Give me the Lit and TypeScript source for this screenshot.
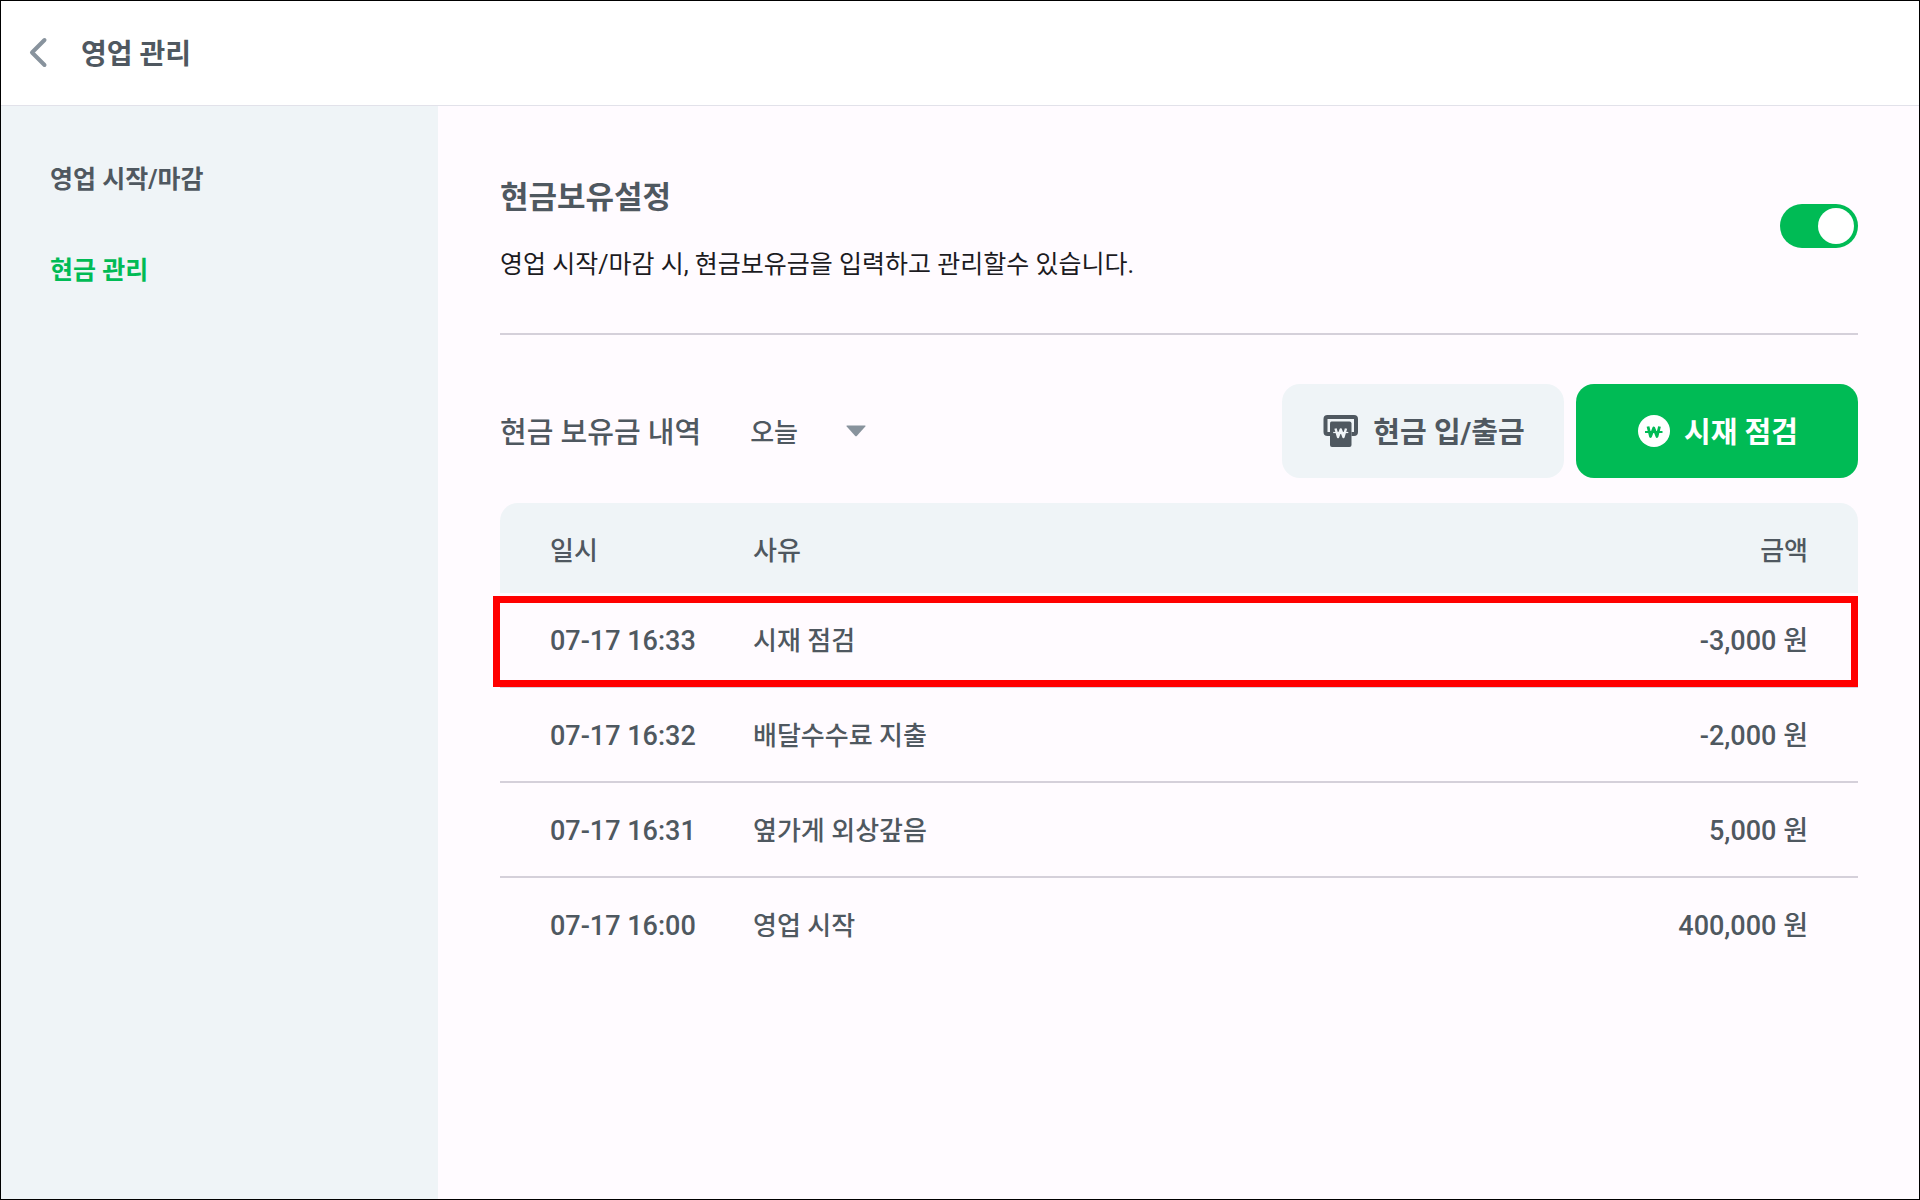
import { LitElement, html, css, svg } from "lit";
import { customElement, state } from "lit/decorators.js";
import { classMap } from "lit/directives/class-map.js";

interface CashEntry {
  date: string;
  reason: string;
  amount: number;
  highlighted?: boolean;
}

const ENTRIES: CashEntry[] = [
  { date: "07-17 16:33", reason: "시재 점검", amount: -3000, highlighted: true },
  { date: "07-17 16:32", reason: "배달수수료 지출", amount: -2000 },
  { date: "07-17 16:31", reason: "옆가게 외상갚음", amount: 5000 },
  { date: "07-17 16:00", reason: "영업 시작", amount: 400000 },
];

const backIcon = svg`<svg class="back-icon" viewBox="0 0 20 32" aria-hidden="true">
  <path d="M16.5 3 L4 15.5 L16.5 28" fill="none" stroke="currentColor" stroke-width="4" stroke-linecap="round" stroke-linejoin="round"/>
</svg>`;

const cashIcon = svg`<svg class="cash-icon" viewBox="0 0 36 32" aria-hidden="true">
  <path d="M7 19 H4.5 Q2.5 19 2.5 17 V4 Q2.5 2 4.5 2 H31 Q33 2 33 4 V17 Q33 19 31 19 H28.5" fill="none" stroke="currentColor" stroke-width="4"/>
  <path d="M8.5 6.5 H26.5 Q28.5 6.5 28.5 8.5 V30 Q28.5 32 26.5 32 H9 Q7 32 7 30 V8.5 Q7 6.5 8.5 6.5 Z" fill="currentColor"/>
  <path d="M12.5 13.5 L15 22 L17.75 14.5 L20.5 22 L23 13.5" fill="none" stroke="#eff4f7" stroke-width="2.4" stroke-linejoin="round"/>
  <path d="M10.2 17.5 H25.3" stroke="#eff4f7" stroke-width="1.2"/>
</svg>`;

const coinIcon = svg`<svg class="coin-icon" viewBox="0 0 32 32" aria-hidden="true">
  <circle cx="16" cy="16" r="16" fill="currentColor"/>
  <path d="M10 11.5 L12.5 21.5 L15.75 13 L19 21.5 L21.5 11.5" fill="none" stroke="#00bb55" stroke-width="2.8" stroke-linejoin="round"/>
  <path d="M7 17 H24.5" stroke="#00bb55" stroke-width="2"/>
</svg>`;

@customElement("app-root")
export class AppRoot extends LitElement {
  @state() private cashEnabled = true;

  static styles = css`
    :host {
      display: block;
      --ink: #4f5860;
      --green: #00bb55;
      --panel: #eff4f7;
      color: var(--ink);
      font-family: Roboto, "Noto Sans CJK KR", sans-serif;
      font-size: 26px;
      line-height: 40px;
    }
    * {
      box-sizing: border-box;
    }
    h1, h2, h3, p {
      margin: 0;
    }
    button, select {
      font: inherit;
      color: inherit;
      border: 0;
      background: none;
      padding: 0;
      cursor: pointer;
    }
    .screen {
      min-height: 100vh;
      display: flex;
      flex-direction: column;
      border: 1px solid #000;
      background: #fffbff;
    }
    .topbar {
      display: flex;
      align-items: center;
      gap: 33px;
      height: 105px;
      padding: 0 27px;
      background: #fff;
      border-bottom: 1px solid #e2e2ea;
    }
    .back {
      display: flex;
      color: #88939d;
    }
    .back-icon {
      width: 20px;
      height: 32px;
    }
    .title {
      padding-top: 4px;
      font-size: 28px;
      font-weight: 700;
    }
    .body {
      flex: 1;
      display: flex;
    }
    .sidebar {
      flex: 0 0 437px;
      display: flex;
      flex-direction: column;
      align-items: flex-start;
      gap: 51px;
      padding: 54px 49px;
      background: var(--panel);
    }
    .nav-link {
      color: inherit;
      text-decoration: none;
      font-size: 25px;
      font-weight: 700;
    }
    .nav-link.active {
      color: var(--green);
    }
    .content {
      flex: 1;
      min-width: 0;
      padding: 72px 61px 0 62px;
    }
    .setting {
      display: flex;
      justify-content: space-between;
      align-items: center;
      padding-bottom: 48px;
      border-bottom: 2px solid #d5d0da;
    }
    .setting-text {
      display: flex;
      flex-direction: column;
      gap: 27px;
    }
    .setting-title {
      font-size: 31px;
      font-weight: 700;
    }
    .setting-note {
      font-size: 25px;
      color: #1c1b1f;
    }
    .switch {
      appearance: none;
      display: flex;
      width: 78px;
      height: 44px;
      margin: 0 0 12px;
      padding: 4px;
      border-radius: 22px;
      background: #b5bcc2;
      cursor: pointer;
    }
    .switch::before {
      content: "";
      width: 36px;
      height: 36px;
      border-radius: 50%;
      background: #fff;
    }
    .switch:checked {
      justify-content: flex-end;
      background: var(--green);
    }
    .toolbar {
      display: flex;
      align-items: center;
      gap: 12px;
      padding: 49px 0 25px;
    }
    .list-title {
      padding-top: 4px;
      font-size: 29px;
      font-weight: 500;
    }
    .period {
      display: flex;
      align-items: center;
      margin: 0 auto 0 37px;
    }
    .period-select {
      appearance: none;
      width: 116px;
      height: 44px;
      padding-top: 4px;
      font-size: 26px;
      font-weight: 500;
    }
    .period-arrow {
      width: 20px;
      height: 12px;
      margin-left: -20px;
      color: #88939d;
      pointer-events: none;
    }
    .action {
      display: flex;
      justify-content: center;
      align-items: center;
      gap: 14px;
      width: 282px;
      height: 94px;
      padding-left: 2px;
      border-radius: 18px;
      font-size: 29px;
      font-weight: 700;
      background: var(--panel);
    }
    .action.primary {
      background: var(--green);
      color: #fff;
    }
    .action-label {
      padding-top: 4px;
    }
    .cash-icon {
      width: 36px;
      height: 32px;
    }
    .coin-icon {
      width: 32px;
      height: 32px;
    }
    .history {
      width: 100%;
      border-collapse: separate;
      border-spacing: 0;
      font-weight: 500;
    }
    .history th {
      height: 90px;
      padding: 6px 0 0;
      font-weight: 500;
      text-align: left;
      background: var(--panel);
    }
    .history td {
      height: 95px;
      padding: 2px 0 0;
      border-bottom: 2px solid #d5d0da;
    }
    .history tr:last-child td {
      border-bottom-color: transparent;
    }
    .history .date {
      width: 253px;
      padding-left: 50px;
    }
    .history .amount {
      text-align: right;
      padding-right: 50px;
    }
    .history td.date,
    .history td.amount {
      font-size: 27px;
    }
    .history th:first-child {
      border-top-left-radius: 18px;
    }
    .history th:last-child {
      border-top-right-radius: 18px;
    }
    .row {
      position: relative;
    }
    .row.highlighted::after {
      content: "";
      position: absolute;
      inset: 3px 0 1px -7px;
      border: 7px solid #f00;
      pointer-events: none;
    }
  `;

  private toggleCash(event: Event) {
    this.cashEnabled = (event.target as HTMLInputElement).checked;
  }

  private renderRow(entry: CashEntry) {
    return html`
      <tr class=${classMap({ row: true, highlighted: !!entry.highlighted })}>
        <td class="date">${entry.date}</td>
        <td>${entry.reason}</td>
        <td class="amount">${entry.amount.toLocaleString("en-US")} 원</td>
      </tr>
    `;
  }

  render() {
    return html`
      <div class="screen">
        <header class="topbar">
          <button class="back" type="button" aria-label="뒤로">${backIcon}</button>
          <h1 class="title">영업 관리</h1>
        </header>
        <div class="body">
          <nav class="sidebar">
            <a class="nav-link" href="#business">영업 시작/마감</a>
            <a class="nav-link active" href="#cash" aria-current="page">현금 관리</a>
          </nav>
          <main class="content">
            <section class="setting">
              <div class="setting-text">
                <h2 class="setting-title"><label for="cash-switch">현금보유설정</label></h2>
                <p class="setting-note">영업 시작/마감 시, 현금보유금을 입력하고 관리할수 있습니다.</p>
              </div>
              <input class="switch" id="cash-switch" type="checkbox" role="switch"
                .checked=${this.cashEnabled} @change=${this.toggleCash} />
            </section>
            <section>
              <div class="toolbar">
                <h3 class="list-title"><label for="period">현금 보유금 내역</label></h3>
                <div class="period">
                  <select class="period-select" id="period">
                    <option>오늘</option>
                  </select>
                  <svg class="period-arrow" viewBox="0 0 20 12" aria-hidden="true">
                    <path d="M1 0.5 H19 Q20 0.5 19.3 1.5 L11 10.8 Q10 11.8 9 10.8 L0.7 1.5 Q0 0.5 1 0.5 Z" fill="currentColor"/>
                  </svg>
                </div>
                <button class="action" type="button">${cashIcon}<span class="action-label">현금 입/출금</span></button>
                <button class="action primary" type="button">${coinIcon}<span class="action-label">시재 점검</span></button>
              </div>
              <table class="history">
                <thead>
                  <tr>
                    <th class="date" scope="col">일시</th>
                    <th scope="col">사유</th>
                    <th class="amount" scope="col">금액</th>
                  </tr>
                </thead>
                <tbody>
                  ${ENTRIES.map((entry) => this.renderRow(entry))}
                </tbody>
              </table>
            </section>
          </main>
        </div>
      </div>
    `;
  }
}
